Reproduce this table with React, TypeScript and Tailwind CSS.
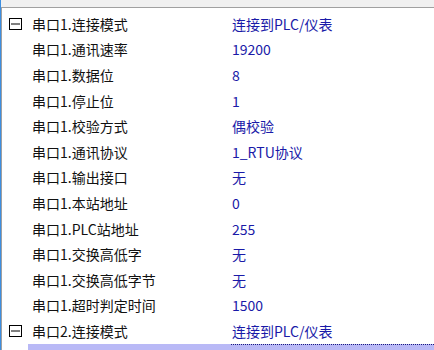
type Row = { label: string; value: string; group?: boolean };

const rows: Row[] = [
  { label: "串口1.连接模式", value: "连接到PLC/仪表", group: true },
  { label: "串口1.通讯速率", value: "19200" },
  { label: "串口1.数据位", value: "8" },
  { label: "串口1.停止位", value: "1" },
  { label: "串口1.校验方式", value: "偶校验" },
  { label: "串口1.通讯协议", value: "1_RTU协议" },
  { label: "串口1.输出接口", value: "无" },
  { label: "串口1.本站地址", value: "0" },
  { label: "串口1.PLC站地址", value: "255" },
  { label: "串口1.交换高低字", value: "无" },
  { label: "串口1.交换高低字节", value: "无" },
  { label: "串口1.超时判定时间", value: "1500" },
  { label: "串口2.连接模式", value: "连接到PLC/仪表", group: true },
];

function MinusBox() {
  return (
    <svg width="13" height="12" viewBox="0 0 13 12" className="block">
      <rect x="0.5" y="0.5" width="12" height="11" fill="white" stroke="#000" />
      <line x1="2" y1="6" x2="11" y2="6" stroke="#000" />
    </svg>
  );
}

export default function App() {
  return (
    <div
      className="w-[434px] h-[350px] overflow-hidden bg-white border-l border-[#3d8ee0] flex flex-col"
      style={{ fontFamily: '"Noto Sans CJK SC", "Noto Sans", sans-serif' }}
    >
      <div className="h-[8px] bg-[#f0f0f0] border-b border-[#a0a0a0] shrink-0" />
      <div className="flex-1 border-l border-[#a0a0a0] pt-[3px] text-[14px] leading-none">
        {rows.map((r, i) => (
          <div key={i} className="grid grid-cols-[26px_203px_1fr] h-[25.6px] items-center">
            <div className="flex justify-center pl-[1px]">{r.group && <MinusBox />}</div>
            <div className="pl-[4px] text-[#111] whitespace-nowrap">{r.label}</div>
            <div className="pl-[1px] text-[#1a1aa8] whitespace-nowrap">{r.value}</div>
          </div>
        ))}
        {/* selected row, only its top edge is visible */}
        <div className="grid grid-cols-[26px_203px_1fr] h-[25.6px]">
          <div />
          <div className="bg-[#b9b9f6]" />
          <div className="bg-[#b9b9f6] border-t border-dotted border-[#1a1a80]" />
        </div>
      </div>
    </div>
  );
}
